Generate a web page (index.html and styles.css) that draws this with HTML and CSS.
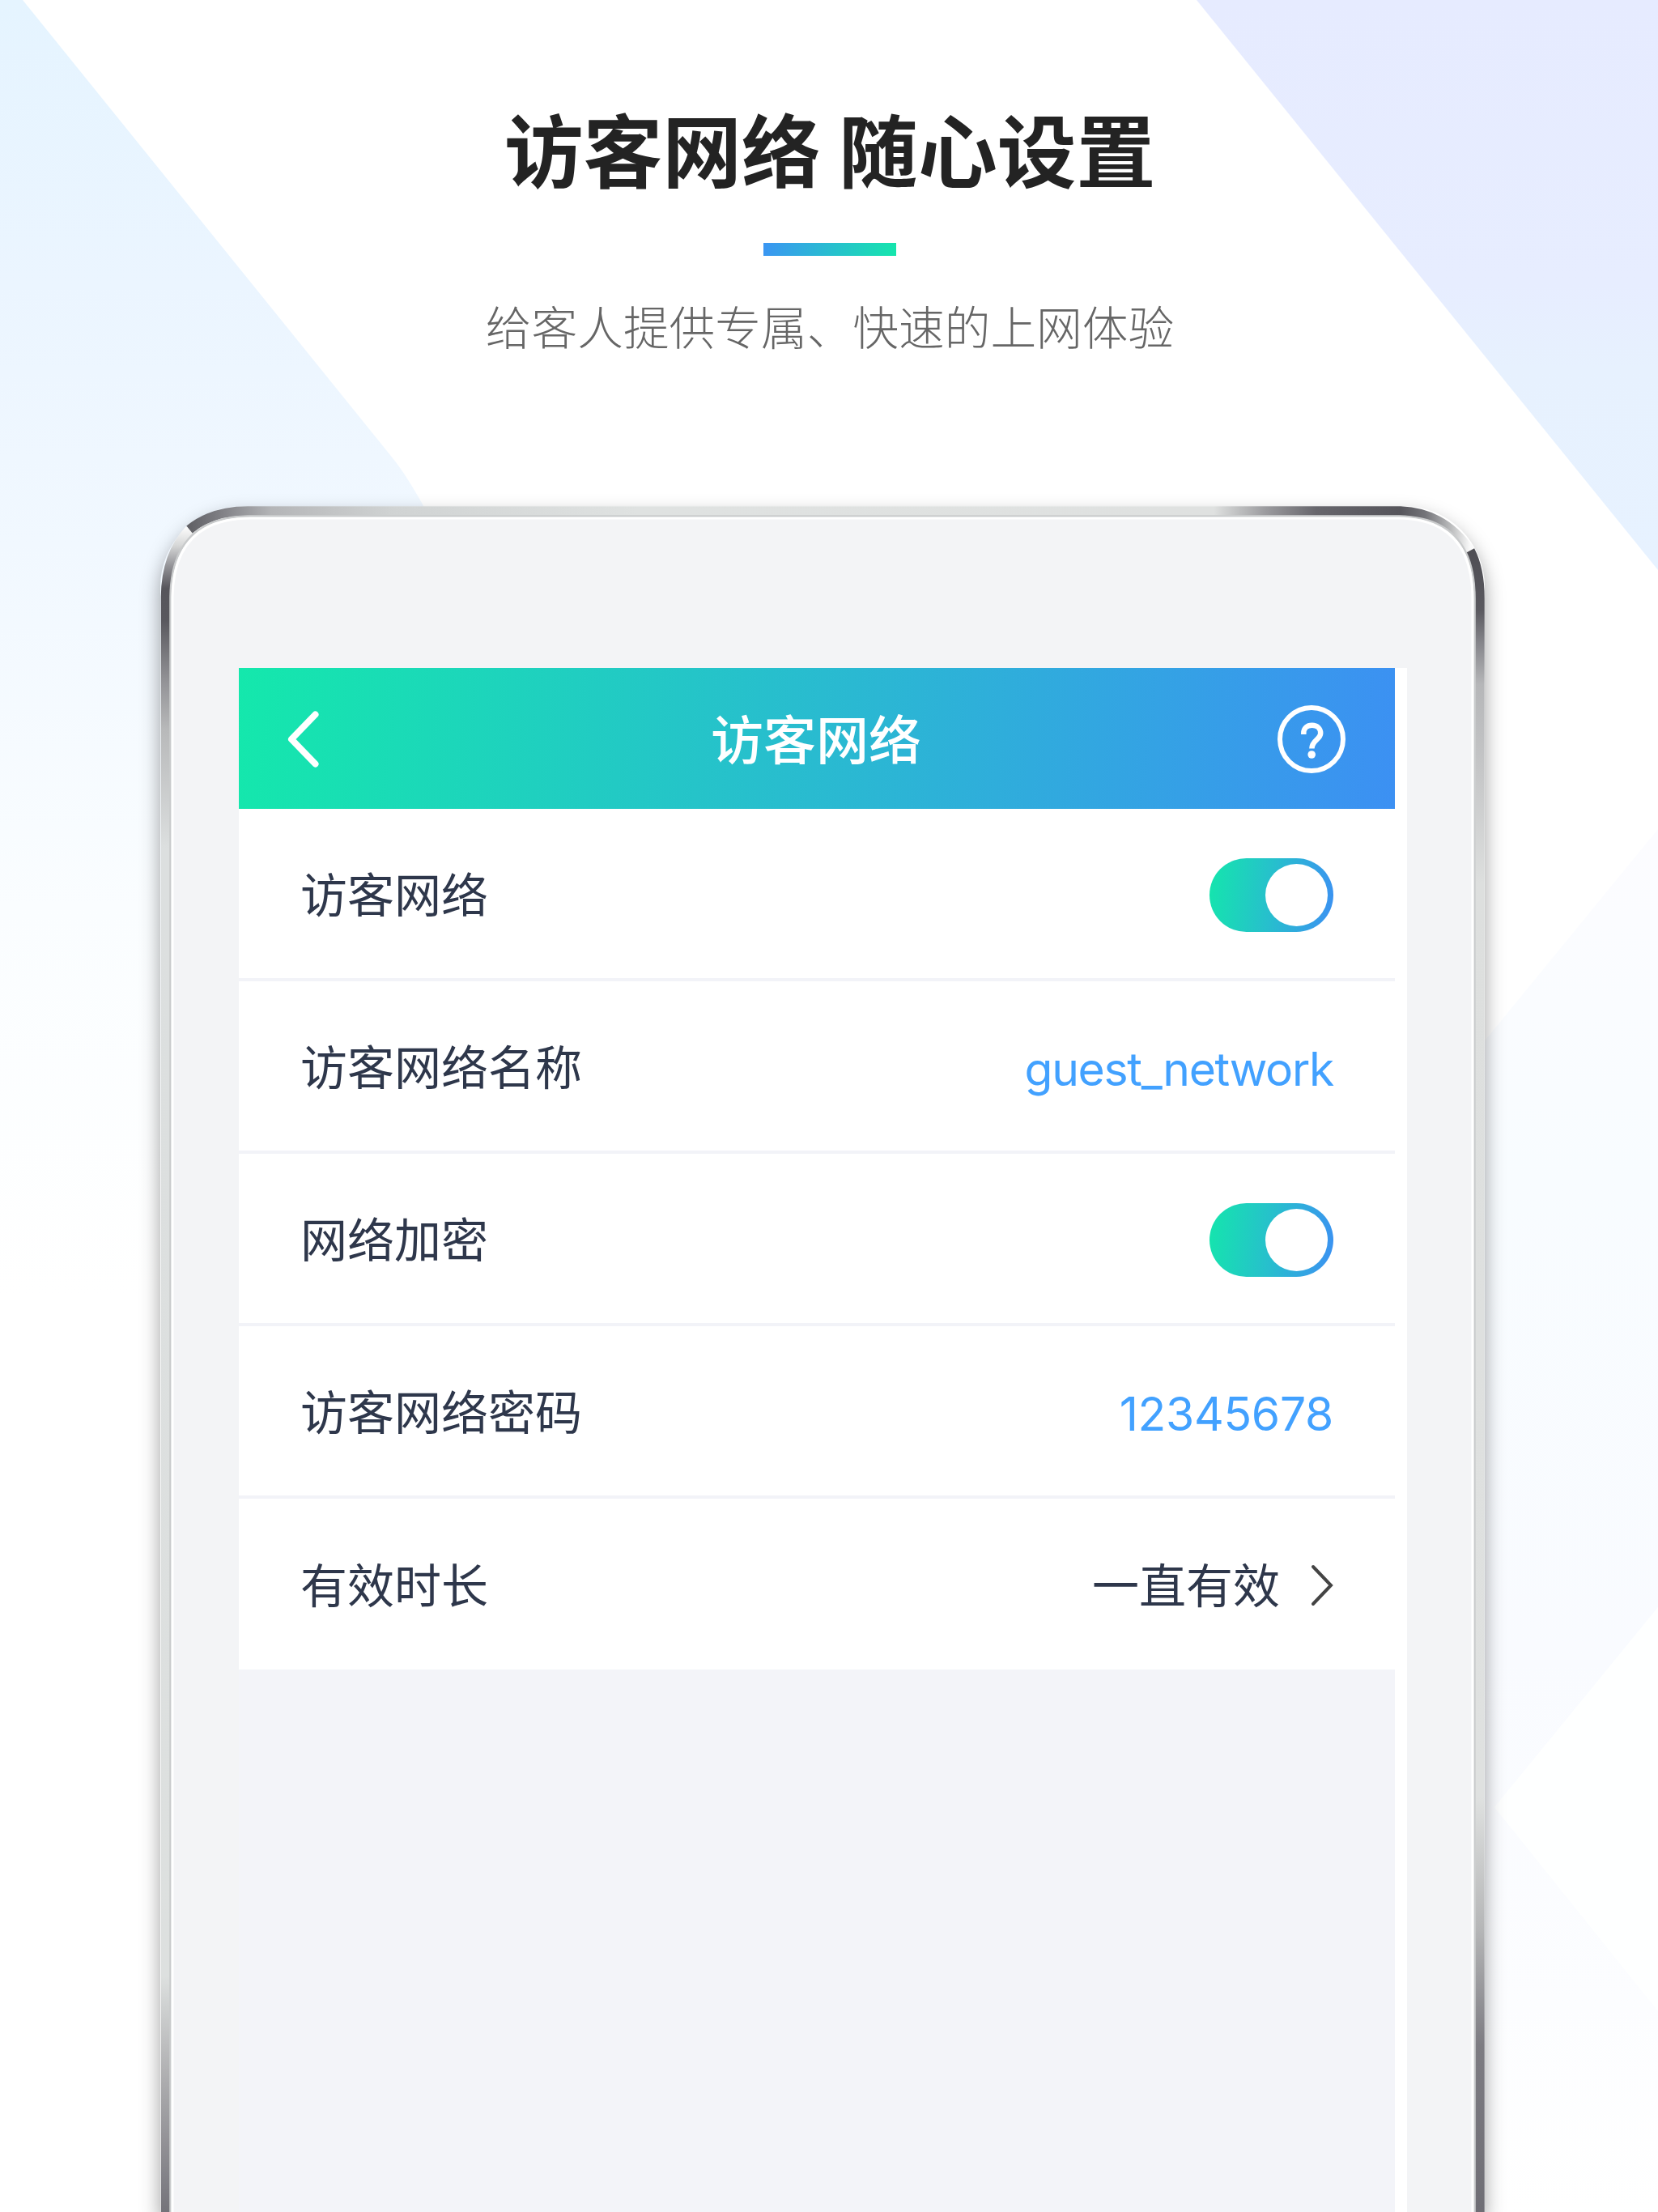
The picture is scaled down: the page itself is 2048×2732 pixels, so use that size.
FILE: index.html
```html
<!DOCTYPE html>
<html lang="zh-CN">
<head>
<meta charset="utf-8">
<title>访客网络</title>
<link rel="stylesheet" href="styles.css">
</head>
<body>
<div class="page">
  <svg class="backdrop" viewBox="0 0 2048 2732" aria-hidden="true">
    <defs>
      <linearGradient id="bg-left" gradientUnits="userSpaceOnUse" x1="0" y1="0" x2="0" y2="1600">
        <stop offset="0" stop-color="#e5f4ff"/><stop offset=".22" stop-color="#ebf5ff"/>
        <stop offset=".42" stop-color="#f1f8ff"/><stop offset=".7" stop-color="#fafdff"/><stop offset="1" stop-color="#fff"/>
      </linearGradient>
      <linearGradient id="bg-right" gradientUnits="userSpaceOnUse" x1="0" y1="0" x2="0" y2="700">
        <stop offset="0" stop-color="#e6ebff"/><stop offset=".5" stop-color="#e7edff"/><stop offset=".65" stop-color="#e7f1fe"/><stop offset="1" stop-color="#e7f2ff"/>
      </linearGradient>
      <linearGradient id="bg-mid" gradientUnits="userSpaceOnUse" x1="0" y1="1030" x2="0" y2="2732">
        <stop offset="0" stop-color="#fcfcff"/><stop offset=".25" stop-color="#f8fcff"/>
        <stop offset=".6" stop-color="#f9fbff"/><stop offset=".85" stop-color="#fcfdff"/><stop offset="1" stop-color="#fff"/>
      </linearGradient>
    </defs>
    <path fill="url(#bg-left)" d="M0 0H28L482 562Q502 586 526 630V1700H0Z"/>
    <path fill="url(#bg-right)" d="M1478 0H2048V704Z"/>
    <path fill="url(#bg-mid)" d="M2048 1024L1700 1449V2732H2048Z"/>
    <path fill="#feffff" d="M2048 1985L1846 2232L2048 2484Z"/>
  </svg>

  <header class="hero">
    <h1 class="hero-title">访客网络 随心设置</h1>
    <span class="hero-accent"></span>
    <p class="hero-subtitle">给客人提供专属、快速的上网体验</p>
  </header>

  <main class="tablet">
    <svg class="tablet-rim" viewBox="0 0 1636 2107" aria-hidden="true">
      <defs>
        <linearGradient id="rim-left" gradientUnits="userSpaceOnUse" x1="0" y1="27" x2="0" y2="2107">
          <stop offset="0" stop-color="#fafafa"/><stop offset=".01" stop-color="#d8d9d9"/><stop offset=".022" stop-color="#96969a"/>
          <stop offset=".036" stop-color="#56555b"/><stop offset=".055" stop-color="#59585e"/><stop offset=".09" stop-color="#919195"/>
          <stop offset=".12" stop-color="#b8b9ba"/><stop offset=".19" stop-color="#dcdfdf"/><stop offset=".86" stop-color="#dde0df"/>
          <stop offset=".92" stop-color="#aeaeb0"/><stop offset="1" stop-color="#74737a"/>
        </linearGradient>
        <linearGradient id="rim-top" gradientUnits="userSpaceOnUse" x1="34" y1="0" x2="1618" y2="0">
          <stop offset="0" stop-color="#5f5f64"/><stop offset=".03" stop-color="#85858a"/><stop offset=".065" stop-color="#b4b5b7"/>
          <stop offset=".16" stop-color="#d0d3d3"/><stop offset=".35" stop-color="#dfe2e1"/><stop offset=".8" stop-color="#dfe1e0"/>
          <stop offset=".84" stop-color="#9c9c9f"/><stop offset=".88" stop-color="#67666c"/><stop offset=".945" stop-color="#56555b"/>
          <stop offset=".965" stop-color="#747479"/><stop offset=".985" stop-color="#bbbcbd"/><stop offset="1" stop-color="#fafafa"/>
        </linearGradient>
        <linearGradient id="rim-right" gradientUnits="userSpaceOnUse" x1="0" y1="56" x2="0" y2="2107">
          <stop offset="0" stop-color="#4f4e54"/><stop offset=".035" stop-color="#5a595f"/><stop offset=".055" stop-color="#85858a"/>
          <stop offset=".08" stop-color="#b5b6b8"/><stop offset=".14" stop-color="#c8c9ca"/><stop offset=".2" stop-color="#dddfde"/>
          <stop offset=".75" stop-color="#dfe1e0"/><stop offset=".83" stop-color="#b5b6b7"/><stop offset=".9" stop-color="#7d7c82"/>
          <stop offset="1" stop-color="#6f6e75"/>
        </linearGradient>
      </defs>
      <path class="tablet-face" d="M7 2107V107Q7 7 98 7H1528Q1628 7 1628 107V2107Z"/>
      <g class="tablet-edge">
        <path stroke="url(#rim-left)" d="M6.500 2120V112Q7 60 36 29"/>
        <path stroke="url(#rim-top)" d="M36 29Q64 6 108 6H1532Q1586 8 1618 55"/>
        <path stroke="url(#rim-right)" d="M1618 55Q1630 78 1630 114V2120"/>
      </g>
      <path class="tablet-bevel" d="M12.500 2120V112Q14 12.500 112 12.500H1530Q1623.500 14 1623.500 114V2120"/>
      <path class="tablet-shine" d="M15 2120V112Q16.500 15 112 15H1530Q1621 16.500 1621 114V2120"/>
    </svg>

    <div class="bay">
      <section class="screen">
        <nav class="navbar">
          <svg class="icon-back" viewBox="0 0 40 70"><path d="M34.500 4.500L5 35L34.500 65.500"/></svg>
          <h2 class="navbar-title">访客网络</h2>
          <svg class="icon-help" viewBox="0 0 84 84">
            <circle cx="42" cy="42" r="39"/>
            <path class="hook" d="M32.300 36V34.500C32.300 28.500 36.500 24.800 42.700 24.800C49 24.800 53.200 28.800 53.200 34.500C53.200 42.500 42.400 43 42.400 53.500"/>
            <circle class="dot" cx="42.200" cy="61" r="4.800"/>
          </svg>
        </nav>
        <ul class="settings">
          <li class="row"><span class="label">访客网络</span><span class="toggle"></span></li>
          <li class="row"><span class="label">访客网络名称</span><span class="value value-name">guest_network</span></li>
          <li class="row"><span class="label">网络加密</span><span class="toggle"></span></li>
          <li class="row"><span class="label">访客网络密码</span><span class="value">12345678</span></li>
          <li class="row row-last"><span class="label">有效时长</span>
            <span class="choice"><span class="choice-text">一直有效</span><svg class="icon-next" viewBox="0 0 28 52"><path d="M3 3L25 26L3 49"/></svg></span></li>
        </ul>
      </section>
    </div>
  </main>
</div>
</body>
</html>
```
FILE: styles.css
```css
* { box-sizing: border-box; }

body {
  margin: 0;
  background: #fff;
  font-family: "Noto Sans CJK SC", sans-serif;
}

.page {
  position: relative;
  width: 2048px;
  height: 2732px;
  overflow: hidden;
  display: flex;
  flex-direction: column;
}

.backdrop {
  position: absolute;
  inset: 0;
  width: 2048px;
  height: 2732px;
}

.hero {
  position: relative;
  height: 625px;
  padding: 109px 0 0 2px;
  display: flex;
  flex-direction: column;
  align-items: center;
}

.hero-title {
  margin: 0;
  font-size: 97.8px;
  font-weight: 700;
  line-height: 146px;
  color: #232323;
  white-space: nowrap;
}

.hero-accent {
  width: 164px;
  height: 16px;
  margin: 45px 0 43px;
  background: linear-gradient(100deg, #3b95f3, #15e6ac);
}

.hero-subtitle {
  margin: 0;
  font-size: 56.7px;
  font-weight: 300;
  line-height: 84px;
  color: #666;
  white-space: nowrap;
}

.tablet {
  position: relative;
  width: 1636px;
  height: 2107px;
  margin-left: 198px;
  padding: 200px 96px 0 97px;
  border-radius: 100px 100px 0 0;
  box-shadow: 0 12px 24px rgba(0, 0, 0, .38);
}

.tablet-rim {
  position: absolute;
  inset: 0;
  width: 1636px;
  height: 2107px;
}

.tablet-face { fill: #f3f4f6; }
.tablet-edge { fill: none; stroke-width: 11.5; }
.tablet-bevel { fill: none; stroke: #c9cbcc; stroke-width: 2.5; }
.tablet-shine { fill: none; stroke: #fff; stroke-width: 3; }

.bay {
  position: relative;
  width: 1443px;
  height: 1907px;
  padding-right: 15px;
  background: #fff;
}

.screen {
  width: 1428px;
  height: 1907px;
  background: #f3f4f9;
}

.navbar {
  height: 174px;
  padding: 2px 61px 0 60px;
  display: flex;
  align-items: center;
  justify-content: space-between;
  background: linear-gradient(97deg, #14e8ac, #29bbd0 50%, #3c90f3);
  color: #fff;
}

.navbar svg { fill: none; stroke: #fff; stroke-linecap: round; stroke-linejoin: round; }
.icon-back { width: 40px; height: 70px; stroke-width: 8; }
.icon-help { width: 84px; height: 84px; stroke-width: 6; }
.icon-help .hook { stroke-linecap: butt; stroke-width: 6.5; }
.icon-help .dot { fill: #fff; stroke: none; }

.navbar-title {
  margin: 0 0 0 43px;
  padding-bottom: 6px;
  font-size: 65px;
  font-weight: 500;
  line-height: 96px;
}

.settings {
  margin: 0;
  padding: 0;
  list-style: none;
  background: #fff;
}

.row {
  height: 213px;
  padding: 3px 76px 0;
  display: flex;
  align-items: center;
  justify-content: space-between;
  border-bottom: 4px solid #f2f3f8;
}

.row-last { height: 211px; border-bottom: 0; }

.label, .choice-text {
  padding-bottom: 6px;
  font-size: 58px;
  line-height: 86px;
  color: #2e374b;
}

.value {
  padding-top: 4px;
  font-family: Inter, sans-serif;
  font-size: 57px;
  letter-spacing: -.3px;
  color: #42a1ff;
}

.value-name { letter-spacing: -1.3px; }

.toggle {
  width: 153px;
  height: 91px;
  padding: 7px;
  border-radius: 46px;
  display: flex;
  justify-content: flex-end;
  background: linear-gradient(97deg, #14e6ac, #27bfcd 50%, #3c90f3);
}

.toggle::after {
  content: "";
  width: 77px;
  height: 77px;
  border-radius: 50%;
  background: #fff;
}

.choice { display: flex; align-items: center; gap: 38px; }
.icon-next { width: 28px; height: 52px; fill: none; stroke: #444; stroke-width: 4; stroke-linecap: round; stroke-linejoin: miter; }
```
